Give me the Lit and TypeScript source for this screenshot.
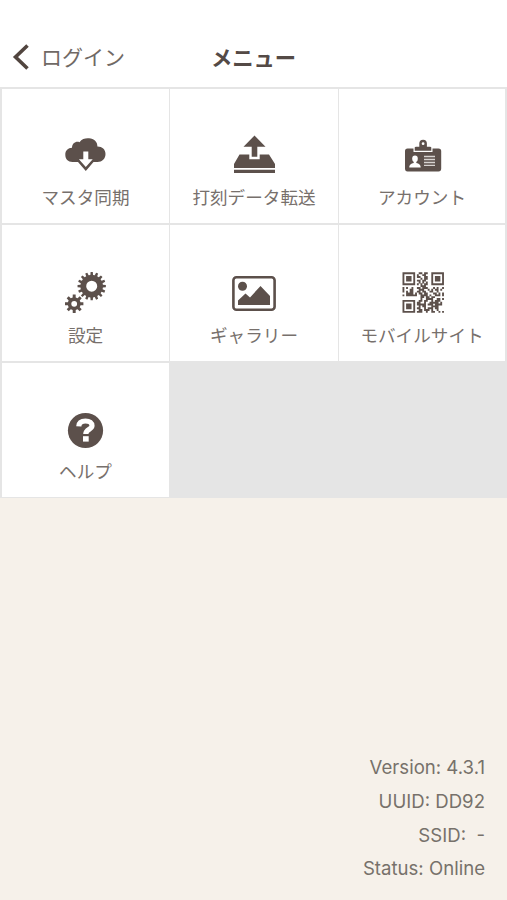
import { LitElement, html, svg, css } from "lit";
import { customElement } from "lit/decorators.js";

const gear = (cx: number, cy: number, outer: number, inner: number, hole: number, teeth: number) => {
  const step = (Math.PI * 2) / teeth;
  const pt = (r: number, a: number) => `${(cx + r * Math.sin(a)).toFixed(2)} ${(cy - r * Math.cos(a)).toFixed(2)}`;
  let d = "";
  for (let i = 0; i < teeth; i++) {
    const a = i * step;
    d += `${i ? "L" : "M"}${pt(inner, a - step * 0.3)}L${pt(outer, a - step * 0.2)}L${pt(outer, a + step * 0.2)}L${pt(inner, a + step * 0.3)}`;
  }
  return `${d}ZM${cx - hole} ${cy}a${hole} ${hole} 0 1 0 ${hole * 2} 0a${hole} ${hole} 0 1 0 ${-hole * 2} 0Z`;
};

const QR = [
  "#######..##.##..#######",
  "#.....#.#..##...#.....#",
  "#.###.#.##..##..#.###.#",
  "#.###.#...#.##..#.###.#",
  "#.###.#.##.##...#.###.#",
  "#.....#..#.#.#..#.....#",
  "#######.#.#.##..#######",
  "..........###..........",
  "#.#..#..##.###...#.#..#",
  "#...##...###..#.#.##.#.",
  "#.#.##..##.##..##..#...",
  "..####.#.##.##...##.#.#",
  "#.######..####.#..###.#",
  "..........##.##.##.....",
  "..........#..####..##.#",
  "#######..##.##..#.###..",
  "#.....#.##..#..#####.#.",
  "#.###.#.#####.###.####.",
  "#.###.#..#.##...####...",
  "#.###.#.##..#.###.##...",
  "#.....#..##.###.#..#...",
  "#######.###..#..##..#.#",
];
const qrPath = QR.map((row, y) => [...row].map((c, x) => (c === "#" ? `M${x} ${y}h1.03v1.03h-1.03z` : "")).join("")).join("");

const icons = {
  sync: svg`<path d="M8.500 28C4 28 1.300 25 1.300 20.800C1.300 16.500 4 14 8 13.800C8 9.300 12 6.800 15.500 8.200C18 4.800 21.500 4 25 4.300C30 4.700 33.600 8 33.400 12.600C38 12.500 41.500 15.500 41.500 20C41.500 24.800 38 28 33.500 28H29.500L21.800 37L14 28Z"/>
    <path fill="#fff" d="M19.300 17.500h5v7.700h4.400L21.800 33l-6.900-7.800h4.400z"/>`,
  send: svg`<path d="M22.500 1.500L33.500 12.700H25.300V22.700H19.700V12.700H11.500Z"/>
    <path d="M7.500 20.500H17.300V25.300H27.700V20.500H37L43 30V34H2V30Z"/><path d="M2 35.800h41v3.200h-41z"/>`,
  account: svg`<path d="M7.500 14.500H13.500V18H32.500V14.500H38.500Q41.200 14.500 41.200 17V34.500Q41.200 37.500 38.500 37.500H7.500Q5 37.500 5 34.500V17Q5 14.500 7.500 14.500Z"/>
    <path fill-rule="evenodd" d="M14.700 16.800V13.600Q15 12.700 16 12.700H19.300V9.500A3.800 3.800 0 0 1 26.900 9.500V12.700H30Q31.300 12.700 31.300 13.600V16.800ZM21.700 9.700a1.400 1.400 0 1 0 2.800 0a1.400 1.400 0 1 0-2.800 0Z"/>
    <g fill="#fff"><ellipse cx="15" cy="24.700" rx="2.800" ry="3.300"/><path d="M9.300 33.500C9.300 30.500 11 29.800 13.700 29V27h2.600v2C19 29.800 20.700 30.500 20.700 33.500Z"/></g>
    <path stroke="#d8d4d1" stroke-width="1.300" d="M24 22.500h11M24 25.500h11M24 28.500h11M24 31.400h11"/>`,
  settings: svg`<path fill-rule="evenodd" d="${gear(27.7, 14.2, 14.2, 11.3, 5.5, 16)}"/><path fill-rule="evenodd" d="${gear(10.2, 31.8, 9.3, 6.5, 2.9, 8)}"/>`,
  gallery: svg`<rect x="1.400" y="5.200" width="41.200" height="32.600" rx="3" fill="none" stroke="#5c504b" stroke-width="2.600"/>
    <circle cx="10.500" cy="14.300" r="4.500"/><path d="M6 33V28.500L13.500 21.500L18 25.500L28.500 14L38 24V33Z"/>`,
  qr: svg`<path transform="translate(2.500 0.300) scale(1.800 1.840)" d="${qrPath}"/>`,
  help: svg`<circle cx="21.500" cy="22.500" r="17.600"/>
    <path d="M14.800 18.300C15 14.500 17.500 13 21.500 13C25.700 13 28 15 28 17.800C28 21.500 21.800 21 21.800 26" fill="none" stroke="#fff" stroke-width="5.200"/><path fill="#fff" d="M19 28.200h5.700v5.400h-5.700z"/>`,
};

const items: { label: string; icon: keyof typeof icons }[] = [
  { label: "マスタ同期", icon: "sync" },
  { label: "打刻データ転送", icon: "send" },
  { label: "アカウント", icon: "account" },
  { label: "設定", icon: "settings" },
  { label: "ギャラリー", icon: "gallery" },
  { label: "モバイルサイト", icon: "qr" },
  { label: "ヘルプ", icon: "help" },
];

@customElement("app-root")
export class AppRoot extends LitElement {
  static styles = css`
    :host { display: flex; flex-direction: column; height: 900px; background: #f6f1ea; color: #77706c;
      font-family: "Noto Sans CJK JP", sans-serif; }
    header { height: 87px; flex: none; box-sizing: border-box; padding-top: 26px; background: #fff;
      display: grid; grid-template-columns: 1fr auto 1fr; align-items: center; color: #544a46; }
    .back { display: flex; align-items: center; font-size: 21px; line-height: 30px; padding-left: 12px; font-weight: 400; color: #706965; }
    .back span { margin-bottom: 1px; }
    .back svg { width: 18px; height: 28px; margin-right: 11px; }
    h1 { margin: 0; font-size: 21.3px; font-weight: 700; line-height: 30px; }
    .grid { flex: none; display: grid; grid-template-columns: 167px 168px 166px; grid-template-rows: 134px 136px 134px;
      column-gap: 1px; row-gap: 2px; padding: 2px 2px 1px; background: #e5e5e5; }
    .cell { background: #fff; display: flex; flex-direction: column; align-items: center; justify-content: flex-end;
      padding-bottom: 13.5px; font-size: 17.6px; line-height: 26px; font-weight: 400; white-space: nowrap; }
    .cell svg { width: 44px; height: 44px; margin-bottom: 5.5px; fill: #5c504b; overflow: visible; }
    footer { margin-top: auto; padding: 0 22px 14px 0; text-align: right; font: 400 18.6px/33.7px Inter, "Liberation Sans", sans-serif;
      color: #77716b; white-space: pre; }
  `;

  render() {
    return html`
      <header>
        <div class="back">
          <svg viewBox="0 0 18 28"><path d="M15.500 2.500L3.500 14L15.500 25.500" fill="none" stroke="#51453f" stroke-width="3.600"/></svg><span>ログイン</span>
        </div>
        <h1>メニュー</h1>
      </header>
      <main class="grid">
        ${items.map((i) => html`<div class="cell"><svg viewBox="0 0 44 44">${icons[i.icon]}</svg><span>${i.label}</span></div>`)}
      </main>
      <footer>${["Version: 4.3.1", "UUID: DD92", "SSID:  -", "Status: Online"].map((t) => html`<div>${t}</div>`)}</footer>
    `;
  }
}
